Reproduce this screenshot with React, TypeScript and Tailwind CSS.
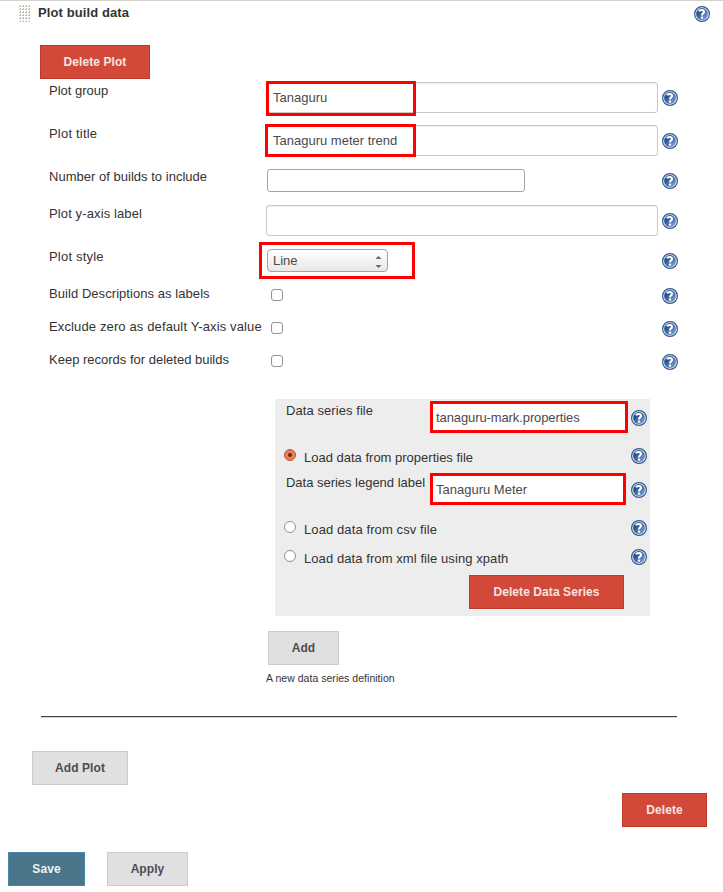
import type { ReactNode } from 'react';

function Help() {
  return (
    <svg className="block h-4 w-4 shrink-0" viewBox="0 0 16 16" aria-label="Help">
      <defs>
        <linearGradient id="helpFill" x1="0" y1="0" x2="1" y2="1">
          <stop offset="0.25" stopColor="#204a87" />
          <stop offset="1" stopColor="#8fb0dc" />
        </linearGradient>
      </defs>
      <circle cx="8" cy="8" r="7.4" fill="#fff" stroke="#2f5792" strokeWidth="1.2" />
      <circle cx="8" cy="8" r="5.9" fill="url(#helpFill)" stroke="#5c7fb3" strokeWidth="0.3" />
      <path d="M5.5 5.4V4.6Q6.4 4 7.9 4Q10 4 10 5.7Q10 6.7 9 7.4Q8 8.1 8 9.6" fill="none" stroke="#fff" strokeWidth="2.1" />
      <rect x="6.9" y="10.6" width="2.2" height="2" fill="#fff" />
    </svg>
  );
}

function Grip() {
  const cells: ReactNode[] = [];
  for (let y = 0; y < 6; y++) {
    for (let x = 0; x < 4; x++) {
      cells.push(
        <path key={`${x}-${y}`} d={`M${x * 3 + 1} ${y * 3}h1v2h-2v-1h1z`} fill={y === 5 ? '#d0d0ca' : '#bcbcb5'} />,
      );
    }
  }
  return <svg className="mt-1 h-[17px] w-[11px]" viewBox="0 0 11 17">{cells}</svg>;
}

const tones = {
  red: 'border-[#bd3a2b] bg-[#d24939] text-[#f5e4e2]',
  gray: 'border-[#cccccc] bg-[#e0e0e0] text-[#4d4d4d]',
  blue: 'border-[#4688a3] bg-[#4b758b] text-[#eef3f5]',
};

function Button({ tone, className, children }: { tone: keyof typeof tones; className: string; children: string }) {
  return (
    <button className={`block h-[34px] shrink-0 border text-center text-[12px] leading-[32px] font-bold tracking-[0.08px] whitespace-nowrap ${tones[tone]} ${className}`}>
      {children}
    </button>
  );
}

function Row({ label, h, field, help, spacing = '', children }: { label: string; h: string; field: string; help: string; spacing?: string; children?: ReactNode }) {
  return (
    <div className={`flex pl-[49px] ${h}`}>
      <div className={`mt-[2px] w-[217px] shrink-0 leading-[18px] whitespace-nowrap ${spacing}`}>{label}</div>
      <div className={`relative w-[396px] shrink-0 ${field}`}>{children}</div>
      <div className={help}><Help /></div>
    </div>
  );
}

function Input({ value }: { value?: string }) {
  return (
    <div className="h-[31px] w-[392px] rounded-[3px] border border-[#c8c8c8] bg-white pl-[6px] leading-[29px] tracking-[0px] text-[#4a4a4a] shadow-[inset_0_1px_1px_#eeeeee]">
      {value}
    </div>
  );
}

function Mark({ className }: { className: string }) {
  return <div className={`absolute border-[3px] border-[#ff0000] ${className}`} />;
}

function Check() {
  return <div className="ml-[5px] h-3 w-3 rounded-[3px] border border-[#96928c] bg-white" />;
}

function Radio({ on }: { on?: boolean }) {
  return on ? (
    <div className="flex h-3 w-3 items-center justify-center rounded-full border border-[#b2593a] bg-[#f27b50]">
      <div className="h-1 w-1 rounded-full bg-[#5c2e20]" />
    </div>
  ) : (
    <div className="h-3 w-3 rounded-full border border-[#96928c] bg-white" />
  );
}

function Option({ label, h, on, spacing }: { label: string; h: string; on?: boolean; spacing: string }) {
  return (
    <div className={`flex pl-[9px] ${h}`}>
      <Radio on={on} />
      <div className={`mt-[-1px] ml-2 w-[327px] leading-[20px] ${spacing}`}>{label}</div>
      <div className="mt-[-1px]"><Help /></div>
    </div>
  );
}

function SeriesField({ label, value, mark, spacing, valueSpacing }: { label: string; value: string; mark: string; spacing: string; valueSpacing: string }) {
  return (
    <div className="flex">
      <div className={`w-[144px] shrink-0 pl-[11px] leading-[18px] whitespace-nowrap ${spacing}`}>{label}</div>
      <div className="relative h-[31px] w-[212px] shrink-0">
        <div className={`ml-[11px] h-[31px] w-[196px] border border-[#cccccc] bg-white pl-[5px] leading-[30px] text-[#4a4a4a] ${valueSpacing}`}>{value}</div>
        <Mark className={mark} />
      </div>
      <div className="mt-[8px]"><Help /></div>
    </div>
  );
}

export default function App() {
  return (
    <div className="h-[892px] w-[723px] overflow-hidden border-t border-[#d3d3cb] bg-white font-['Liberation_Sans',Arial,sans-serif] text-[13px] tracking-[0.08px] text-[#333333]">
      <div className="flex h-11 pl-[19px]">
        <Grip />
        <div className="ml-2 w-[656px] pt-[2px] leading-[20px] font-bold tracking-[0.1px]">Plot build data</div>
        <div className="mt-[5px]"><Help /></div>
      </div>
      <Button tone="red" className="ml-10 w-[110px]">Delete Plot</Button>
      <div className="pt-px">
        <Row label="Plot group" h="h-[43px]" field="pt-[2px]" help="pt-[10px]" spacing="tracking-[0px]">
          <Input value="Tanaguru" />
          <Mark className="top-px left-0 h-[35px] w-[150px]" />
        </Row>
        <Row label="Plot title" h="h-[43px]" field="pt-[2px]" help="pt-[10px]" spacing="tracking-[0.2px]">
          <Input value="Tanaguru meter trend" />
          <Mark className="top-px -left-px h-[33px] w-[151px]" />
        </Row>
        <Row label="Number of builds to include" h="h-[37px]" field="pt-[3px]" help="pt-[7px]" spacing="tracking-[0.02px]">
          <div className="ml-px h-[23px] w-[258px] rounded-[3px] border border-[#a5a39d] bg-white" />
        </Row>
        <Row label="Plot y-axis label" h="h-[43px]" field="pt-[2px]" help="pt-[10px]" spacing="tracking-[0.12px]">
          <Input />
        </Row>
        <Row label="Plot style" h="h-[37px]" field="pt-[3px]" help="pt-[7px]" spacing="tracking-[0.2px]">
          <div className="ml-px flex h-[23px] w-[121px] justify-between rounded-[4px] border border-[#a5a39d] bg-linear-to-b from-white to-[#e9e8e6] pr-[5px] pl-[5px] leading-[22px] tracking-[0px] text-[#4a4a4a]">
            Line
            <svg className="mt-[5px] h-[14px] w-[7px]" viewBox="0 0 7 14">
              <path d="M.5 4 3.5 1l3 3zM.5 10l3 3 3-3z" fill="#666" />
            </svg>
          </div>
          <Mark className="-top-1 -left-[7px] h-[37px] w-[156px]" />
        </Row>
        <Row label="Build Descriptions as labels" h="h-[33px]" field="pt-[6px]" help="pt-[5px]" spacing="tracking-[0.06px]"><Check /></Row>
        <Row label="Exclude zero as default Y-axis value" h="h-[33px]" field="pt-[6px]" help="pt-[5px]" spacing="tracking-[0.13px]"><Check /></Row>
        <Row label="Keep records for deleted builds" h="h-[33px]" field="pt-[6px]" help="pt-[5px]" spacing="tracking-[0px]"><Check /></Row>
      </div>

      <div className="mt-[17px] ml-[275px] h-[217px] w-[375px] bg-[#ededed] pt-[3px]">
        <SeriesField label="Data series file" value="tanaguru-mark.properties" mark="-top-px left-[11px] h-8 w-[198px]" spacing="tracking-[0.07px]" valueSpacing="tracking-[-0.1px]" />
        <div className="h-4" />
        <Option label="Load data from properties file" h="h-[25px]" spacing="tracking-[0px]" on />
        <SeriesField label="Data series legend label" value="Tanaguru Meter" mark="-top-px left-[11px] h-8 w-[196px]" spacing="tracking-[-0.02px]" valueSpacing="tracking-[0px]" />
        <div className="h-4" />
        <Option label="Load data from csv file" h="h-[29px]" spacing="tracking-[0.1px]" />
        <Option label="Load data from xml file using xpath" h="h-[25px]" spacing="tracking-[0.08px]" />
        <Button tone="red" className="ml-[194px] w-[155px]">Delete Data Series</Button>
      </div>

      <Button tone="gray" className="mt-[15px] ml-[268px] w-[71px]">Add</Button>
      <div className="mt-[6px] ml-[266px] text-[10.5px] leading-[14px] tracking-[0.03px]">A new data series definition</div>
      <div className="mt-[31px] ml-[41px] h-[2px] w-[636px] border-t border-b border-t-[#444444] border-b-[#d5d5d5]" />
      <Button tone="gray" className="mt-[33px] ml-8 w-24">Add Plot</Button>
      <Button tone="red" className="mt-2 ml-[622px] w-[85px]">Delete</Button>
      <div className="mt-[25px] flex gap-[22px] pl-2">
        <Button tone="blue" className="w-[77px]">Save</Button>
        <Button tone="gray" className="w-[81px]">Apply</Button>
      </div>
    </div>
  );
}
